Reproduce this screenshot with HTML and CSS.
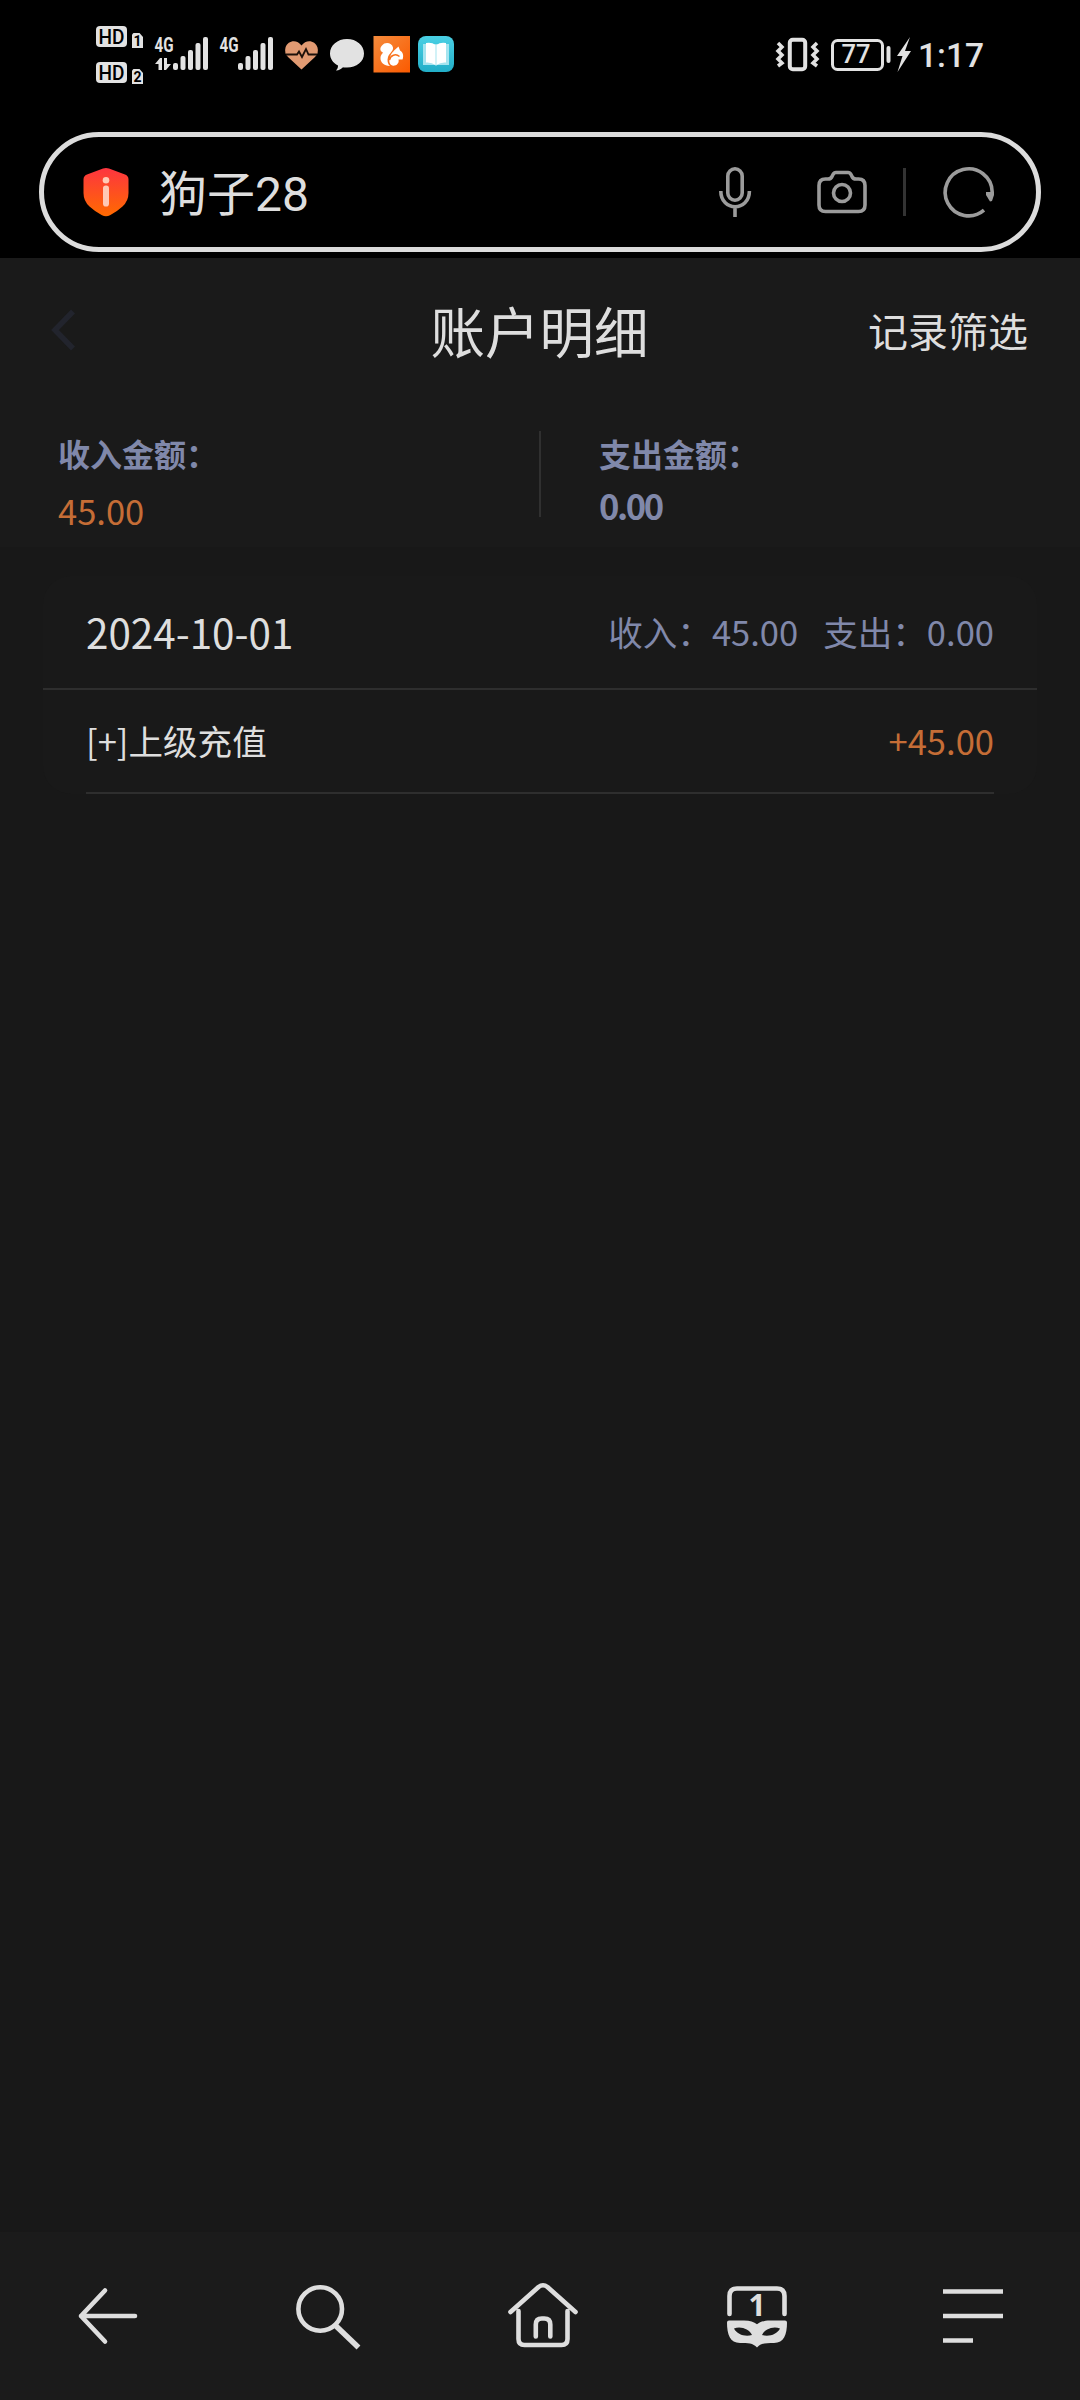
FILE: index.html
```html
<!DOCTYPE html>
<html lang="zh-CN">
<head>
<meta charset="utf-8">
<title>账户明细</title>
<link rel="stylesheet" href="styles.css">
</head>
<body>
<header class="browser">
  <svg class="status" viewBox="0 0 1080 110" fill="#e2e2e2">
    <!-- HD voice badges with SIM numbers -->
    <rect x="96" y="26" width="31" height="21" rx="4"/>
    <text class="hd" x="98.5" y="44" textLength="26" lengthAdjust="spacingAndGlyphs">HD</text>
    <path d="M133.500 33h6l3.500 4v11h-11v-13.500z"/>
    <text class="sim" x="137.500" y="46" text-anchor="middle">1</text>
    <rect x="96" y="62" width="31" height="21" rx="4"/>
    <text class="hd" x="98.5" y="80" textLength="26" lengthAdjust="spacingAndGlyphs">HD</text>
    <path d="M133.500 69h6l3.500 4v11h-11v-13.500z"/>
    <text class="sim" x="137.500" y="82" text-anchor="middle">2</text>
    <!-- signal strength -->
    <text class="net" x="154.500" y="51.500" textLength="19" lengthAdjust="spacingAndGlyphs">4G</text>
    <path d="M155 64l5-6h2v12h-3.500v-6zM164 58h3v6h4l-5 6h-2z"/>
    <g id="bars">
      <rect x="173" y="63" width="5" height="7" rx="2"/>
      <rect x="180.500" y="56" width="5" height="14" rx="2"/>
      <rect x="188" y="50" width="5" height="20" rx="2"/>
      <rect x="195.500" y="43" width="5" height="27" rx="2"/>
      <rect x="203" y="37" width="5" height="33" rx="2"/>
    </g>
    <text class="net" x="219.500" y="51.500" textLength="19" lengthAdjust="spacingAndGlyphs">4G</text>
    <use href="#bars" x="65"/>
    <!-- health -->
    <path fill="#e19a72" d="M301.500 69.500L288 57q-4-4-2.500-9.500C288 40 297 39 301.500 45.500 306 39 315 40 317.500 47.500q1.500 5.500-2.500 9.500z"/>
    <path d="M286 54.500h11l2-3 3 5.500 4-8 2.500 5.500h8.500" fill="none" stroke="#1c100a" stroke-width="1.800"/>
    <!-- message -->
    <path d="M347 39c9.500 0 17 6.300 17 14.500S356.500 67.500 347 67.500c-1.500 0-3 0-4-.3-2 2-4.500 3.500-7 3.300 1.500-1.500 2-3 2-5-5-2.500-8-7-8-12C330 45.300 337.500 39 347 39z"/>
    <!-- UC browser -->
    <rect x="373.500" y="36" width="36.500" height="36.500" fill="url(#uc)"/>
    <path fill="#fff" d="M382 45.500C385 41.500 392 42.500 393 47.500 393.500 51 389.500 53 388 57 387 60 387.500 64 390 66 384 66 380 62 380.500 57.500 380.500 55.500 382 54 383 52.500 380 51.500 379.500 48 382 45.500z"/>
    <path fill="#fff" d="M390 58C390.500 53 395 50 398.500 46.500l1.500 4c3 1.500 4 5.500 2.500 9h-4c1 3.500-2 6.500-5.500 6.200C389.500 65.200 388.500 61 390 58z"/>
    <path fill="none" stroke="#f9701a" stroke-width="1.400" d="M389.500 60c1-4.500 6-7 10-3.500"/>
    <!-- reader -->
    <rect x="418" y="36" width="36" height="36" rx="8" fill="url(#book)"/>
    <path fill="#a5e4ef" d="M423 44h26v21h-12l-1 1-1-1h-12z"/>
    <path fill="#fff" d="M426 43q6-1 9.500 2v20q-4-3-9.500-2.500zM446 43q-6-1-9.500 2v20q4-3 9.500-2.500z"/>
    <!-- vibrate -->
    <g fill="none" stroke="#e2e2e2">
      <rect x="789.800" y="39.800" width="15.400" height="29.400" rx="3" stroke-width="4"/>
      <path stroke-width="3.500" d="M778 43l4 4-4 4 4 4-4 4 4 4-4 3M817 43l-4 4 4 4-4 4 4 4-4 4 4 3"/>
      <rect x="832.500" y="40.500" width="50" height="29" rx="5" stroke-width="3"/>
    </g>
    <text class="level" x="841.500" y="63" textLength="29" lengthAdjust="spacingAndGlyphs">77</text>
    <rect x="886.500" y="46" width="4" height="17" rx="2"/>
    <path d="M910 37l-13 19h5.500l-5 16 13.500-21h-6z"/>
    <text class="clock" x="918" y="67" textLength="66" lengthAdjust="spacingAndGlyphs">1:17</text>
    <defs>
      <linearGradient id="uc" x1="0" y1="0" x2="1" y2="1"><stop stop-color="#f58b3c"/><stop offset="1" stop-color="#fb5a00"/></linearGradient>
      <linearGradient id="book" x1="0" y1="0" x2="0" y2="1"><stop stop-color="#4ad0e4"/><stop offset="1" stop-color="#22aec8"/></linearGradient>
    </defs>
  </svg>
  <div class="address">
    <svg class="shield" viewBox="0 0 46 50">
      <defs><linearGradient id="sh" x1="0" y1="0" x2="0" y2="1"><stop stop-color="#fd3540"/><stop offset="1" stop-color="#ff6a00"/></linearGradient></defs>
      <path fill="url(#sh)" d="M20 1.600q3-1.200 6 0L42 7.500q3.500 1.300 3.500 5V26q0 8-6 13.500-6 5.500-12.500 8.800-4 1.700-8 0Q12.500 45 6.500 39.500.5 34 .5 26V12.500q0-3.700 3.500-5z"/>
      <circle cx="23" cy="13.200" r="3.300" fill="#ffc9b5"/><rect x="20" y="18.500" width="6" height="21" rx="2.800" fill="#ffc9b5"/>
    </svg>
    <span class="query">狗子28</span>
    <svg class="tools" viewBox="714 162 286 60" fill="none" stroke="#9b9b9b" stroke-width="3.600">
      <rect x="727.800" y="168.800" width="14.400" height="31.400" rx="7.200"/>
      <path d="M720.800 191c0 21 28.600 21 28.600 0M735 207v10"/>
      <path d="M825.500 179h2.500q3 0 4-2.500l1-2q1-2 3-2h12q2 0 3 2l1 2q1 2.500 4 2.500h2.500q6.500 0 6.500 6.500v19.500q0 6.500-6.500 6.500h-33q-6.500 0-6.500-6.500v-19.500q0-6.500 6.500-6.500z"/>
      <circle cx="842" cy="193" r="8.500"/>
      <path d="M904.500 168v48" stroke="#333" stroke-width="3"/>
      <path d="M984 210.200A23.500 23.500 0 1 1 992.200 192"/>
      <path d="M986 192h8v3l-2 6-2 .5-4-6.500z" fill="#9b9b9b" stroke="none"/>
    </svg>
  </div>
</header>

<main class="page">
  <section class="top">
    <div class="titlebar">
      <svg class="back" viewBox="0 0 24 42"><path d="M22 2.500L4 21l18 18.500" fill="none" stroke="#22242d" stroke-width="5.500"/></svg>
      <h1 class="title">账户明细</h1>
      <span class="filter">记录筛选</span>
    </div>
    <div class="summary">
      <div class="sum income"><div class="label">收入金额：</div><div class="value">45.00</div></div>
      <div class="sum outgo"><div class="label">支出金额：</div><div class="value">0.00</div></div>
    </div>
  </section>
  <section class="card">
    <div class="day"><span class="date">2024-10-01</span><span class="totals"><span>收入：45.00</span><span>支出：0.00</span></span></div>
    <div class="entry"><span>[+]上级充值</span><span class="amount">+45.00</span></div>
  </section>
</main>

<nav class="nav">
  <svg viewBox="0 2232 216 168"><path d="M105 2290.500L81 2316l24 25.500M81 2316h54"/></svg>
  <svg viewBox="216 2232 216 168"><circle cx="320.200" cy="2309" r="21.800"/><path class="handle" d="M336 2326l22.500 21.500"/></svg>
  <svg viewBox="432 2232 216 168"><path d="M510.500 2312l28-25q4.500-3.500 9 0l28 25M518.500 2311v28q0 6 6 6h37q6 0 6-6v-28M535.800 2336.500v-12q0-6 6-6h2.500q6 0 6 6v12"/></svg>
  <svg viewBox="648 2232 216 168">
    <path d="M729.500 2314v-18q0-7.500 7.500-7.500h40q7.500 0 7.500 7.500v18"/>
    <path class="solid" fill-rule="evenodd" d="M729 2320.500h15c6 0 10 1.500 13 3.800 3-2.300 7-3.800 13-3.800h15q2 0 2 2c0 12-3 20.500-13 20.500-8 0-13 0-17 4.500-4-4.500-9-4.500-17-4.500-10 0-13-8.500-13-20.500q0-2 2-2zM734 2328.500c3 6 11 8.500 18 6.500-3-6-11-9-18-6.500zM780 2328.500c-3 6-11 8.500-18 6.500 3-6 11-9 18-6.500z"/>
    <text class="count" x="757" y="2316" text-anchor="middle">1</text>
  </svg>
  <svg viewBox="864 2232 216 168"><path class="lines" d="M943 2291.500h60M943 2316h60M943 2340.500h30"/></svg>
</nav>
</body>
</html>
```
FILE: styles.css
```css
* { box-sizing: border-box; }

body {
  margin: 0;
  width: 1080px;
  height: 2400px;
  display: flex;
  flex-direction: column;
  background: #181818;
  color: #dedede;
  font-family: "Noto Sans CJK SC", sans-serif;
}

svg { display: block; flex: none; }

/* Status bar and address bar */
.browser { height: 258px; background: #000; }
.status { width: 1080px; height: 110px; font-family: Roboto, sans-serif; }
.hd { font-size: 21px; font-weight: 500; fill: #000; }
.sim { font-size: 14px; font-weight: 700; fill: #000; }
.net { font-size: 21px; font-weight: 700; }
.level { font-size: 25px; font-weight: 500; }
.clock { font-size: 34px; font-weight: 500; }

.address {
  margin: 22px 39px 0;
  height: 120px;
  padding: 0 36px 0 39px;
  border: 5px solid #dcdcdc;
  border-radius: 60px;
  display: flex;
  align-items: center;
}
.shield { width: 46px; height: 50px; }
.query {
  margin-left: 30px;
  padding-top: 5px;
  flex: 1;
  font: 48px/70px Roboto, "Noto Sans CJK SC", sans-serif;
}
.tools { width: 286px; height: 60px; }

/* Account page */
.page { flex: 1; }
.top { height: 289px; background: #1a1a1a; }
.titlebar {
  height: 144px;
  padding: 0 52px 0 51px;
  display: grid;
  grid-template-columns: 1fr auto 1fr;
  align-items: center;
}
.back { width: 24px; height: 42px; }
.title { margin: 0; font-size: 54.500px; line-height: 80px; font-weight: 400; }
.filter { justify-self: end; font-size: 40px; line-height: 60px; }

.summary { display: grid; grid-template-columns: 541px 1fr; padding-top: 29px; }
.sum { height: 86px; padding-left: 58px; line-height: 44px; }
.income { border-right: 2px solid #303030; }
.label { font-size: 32px; font-weight: 700; color: #8088aa; }
.value { font-size: 34.560px; }
.income .value { padding-top: 13px; color: #c56d36; }
.outgo .value { padding-top: 8px; color: #8088aa; font-weight: 700; letter-spacing: -2.400px; }

.card {
  margin: 29px 43px 0;
  height: 218px;
  border-radius: 28px;
  background: #191919;
  font-size: 34.560px;
}
.day {
  height: 114px;
  padding: 0 43px 2px;
  border-bottom: 2px solid #2e2e2e;
  display: flex;
  align-items: center;
  justify-content: space-between;
}
.date { font-size: 40.400px; }
.totals { display: flex; gap: 25px; color: #8088aa; }
.entry {
  height: 104px;
  margin: 0 43px;
  padding-bottom: 2px;
  border-bottom: 2px solid #2e2e2e;
  display: flex;
  align-items: center;
  justify-content: space-between;
}
.amount { color: #c56d36; }

/* Browser toolbar */
.nav { height: 168px; background: #1b1b1b; display: grid; grid-template-columns: repeat(5, 1fr); }
.nav svg {
  width: 216px;
  height: 168px;
  fill: none;
  stroke: #dedede;
  stroke-width: 4.600;
  stroke-linecap: round;
  stroke-linejoin: round;
}
.nav .handle { stroke-width: 5.500; stroke-linecap: butt; }
.nav .lines { stroke-linecap: butt; }
.nav .solid { fill: #dedede; stroke: none; }
.nav .count { fill: #dedede; stroke: none; font: 700 30px "Open Sans", sans-serif; }
```
